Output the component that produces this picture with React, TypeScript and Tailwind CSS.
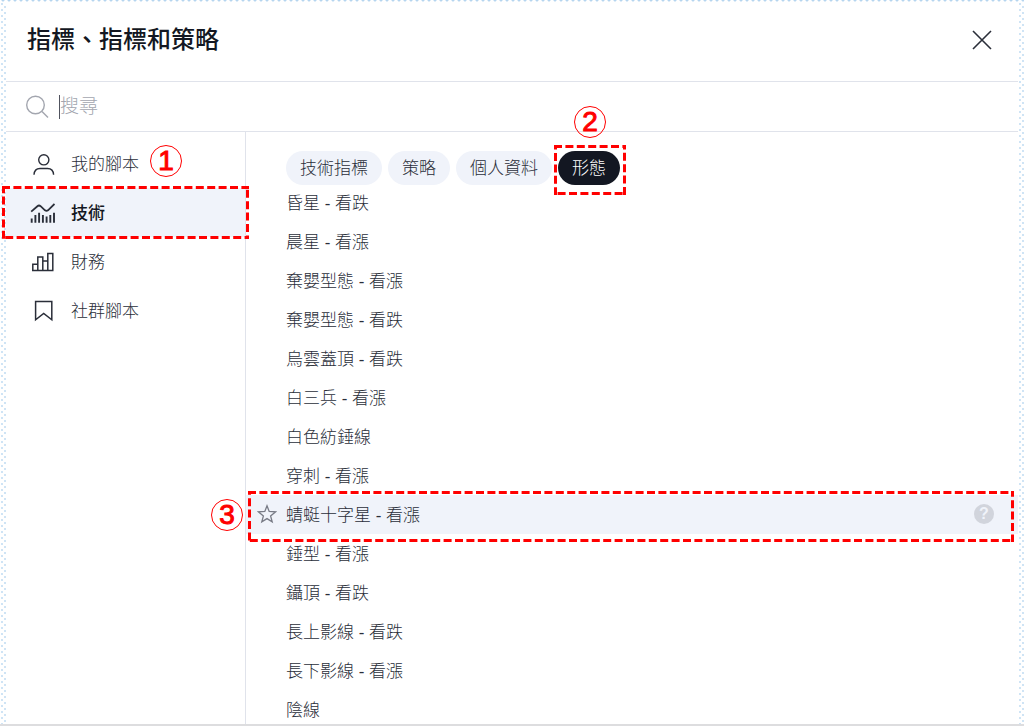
import React, { useState } from 'react';

type IconProps = { className?: string };

function UserIcon({ className }: IconProps) {
  return (
    <svg viewBox="0 0 25 24" className={className} fill="none" stroke="currentColor" strokeWidth="1.4" aria-hidden="true">
      <circle cx="13.8" cy="7.8" r="5.1" />
      <path d="M4 22.8c.2-4 2.600-6.300 6-6.300h7.600c3.400 0 5.800 2.300 6 6.300" />
    </svg>
  );
}

function TechnicalIcon({ className }: IconProps) {
  return (
    <svg viewBox="0 0 25 24" className={className} fill="none" stroke="currentColor" aria-hidden="true">
      <path strokeWidth="1.8" d="M1.200 10.600 7.400 5.200Q9 3.900 10.600 5.200L15 9.300Q16.500 10.500 18 9.300L24.500 3" />
      <path strokeWidth="1.9" d="M1.700 17.500v4.200M5.400 14v7.700M9.100 11.800v9.900M12.900 14v7.700M16.600 15.500v6.200M20.300 14v7.700M24 11.800v9.900" />
    </svg>
  );
}

function FinanceIcon({ className }: IconProps) {
  return (
    <svg viewBox="0 0 25 24" className={className} fill="none" stroke="currentColor" strokeWidth="1.500" aria-hidden="true">
      <path d="M2.800 20.500v-6.300h5M7.800 20.500V7h5v13.500M12.800 11h5M17.800 20.500V3.400h5v17.100M2 20.500h21.500" />
    </svg>
  );
}

function BookmarkIcon({ className }: IconProps) {
  return (
    <svg viewBox="0 0 25 24" className={className} fill="none" stroke="currentColor" strokeWidth="1.500" aria-hidden="true">
      <path d="M5.600 2.500h16.200v18.300l-8.100-6.300-8.100 6.300z" />
    </svg>
  );
}

function DashedFrame({ className }: IconProps) {
  return (
    <div className={`pointer-events-none absolute z-10 ${className}`}>
      <svg className="block h-full w-full overflow-hidden" aria-hidden="true">
        <rect width="100%" height="100%" fill="none" stroke="#ff0000" strokeWidth="6" strokeDasharray="8 3.400" />
      </svg>
    </div>
  );
}

function Step({ n, className }: { n: number; className: string }) {
  return (
    <span
      className={`absolute z-10 flex size-8 items-center justify-center rounded-full border border-[#ff0000] font-['Liberation_Sans',sans-serif] text-[28px] leading-none text-[#ff0000] [-webkit-text-stroke:1px_#ff0000] ${className}`}
    >
      {n}
    </span>
  );
}

const sections = [
  { label: '我的腳本', Icon: UserIcon },
  { label: '技術', Icon: TechnicalIcon },
  { label: '財務', Icon: FinanceIcon },
  { label: '社群腳本', Icon: BookmarkIcon },
];

const tabs = ['技術指標', '策略', '個人資料', '形態'];

const patterns = [
  '昏星 - 看跌',
  '晨星 - 看漲',
  '棄嬰型態 - 看漲',
  '棄嬰型態 - 看跌',
  '烏雲蓋頂 - 看跌',
  '白三兵 - 看漲',
  '白色紡錘線',
  '穿刺 - 看漲',
  '蜻蜓十字星 - 看漲',
  '錘型 - 看漲',
  '鑷頂 - 看跌',
  '長上影線 - 看跌',
  '長下影線 - 看漲',
  '陰線',
];

export default function App() {
  const [section, setSection] = useState('技術');
  const [tab, setTab] = useState('形態');
  const [picked, setPicked] = useState('蜻蜓十字星 - 看漲');

  return (
    <div className="flex h-screen flex-col bg-white font-['Liberation_Sans','Noto_Sans_CJK_TC',sans-serif] text-[17px] text-[#2a2e39]">
      <div className="h-0.5 shrink-0 bg-[radial-gradient(circle_at_3px_0px,#b5d5ef_1px,transparent_2px)] bg-[size:6px_6px]" />
      <div className="flex min-h-0 flex-1">
        <div className="w-1.5 shrink-0 bg-[radial-gradient(circle_at_2px_2px,#cfe4f5_1px,transparent_1px),radial-gradient(circle_at_5px_5px,#cfe4f5_1px,transparent_1px)] bg-[size:6px_6px]" />

        <main className="flex min-w-0 flex-1 flex-col">
          <header className="flex h-20 shrink-0 items-center justify-between border-b border-[#e0e3eb] pr-6 pl-5">
            <h1 className="pb-1 pl-px text-2xl font-medium text-[#131722]">指標、指標和策略</h1>
            <button type="button" aria-label="關閉" className="mb-1 text-[#2a2e39]">
              <svg viewBox="0 0 24 24" className="size-6" fill="none" stroke="currentColor" strokeWidth="1.600" aria-hidden="true">
                <path d="M3 3l18 18M21 3 3 21" />
              </svg>
            </button>
          </header>

          <label className="flex h-[50px] shrink-0 items-center border-b border-[#e0e3eb] pl-5">
            <svg viewBox="0 0 24 24" className="size-6 text-[#a3a6af]" fill="none" stroke="currentColor" strokeWidth="1.400" aria-hidden="true">
              <circle cx="9.500" cy="10" r="8.800" />
              <path d="m16 16.500 6 6" />
            </svg>
            <span className="ml-[9px] h-6 w-px bg-[#50535e]" />
            <input
              type="text"
              aria-label="搜尋"
              placeholder="搜尋"
              className="min-w-0 flex-1 bg-transparent pt-0.5 text-[19px] font-light outline-none placeholder:text-[#a3a6af]"
            />
          </label>

          <div className="flex min-h-0 flex-1">
            <nav className="w-60 shrink-0 border-r border-[#e0e3eb] pt-[7px]">
              {sections.map(({ label, Icon }) => {
                const active = label === section;
                return (
                  <div key={label} className="relative">
                    <button
                      type="button"
                      onClick={() => setSection(label)}
                      className={`flex h-[49px] w-full items-center gap-4 pl-6 text-left ${
                        active ? 'bg-[#f0f3fa] font-medium text-[#131722]' : 'font-light'
                      }`}
                    >
                      <Icon className="h-6 w-[25px] shrink-0 text-[#2a2e39]" />
                      <span className="pt-0.5">{label}</span>
                    </button>
                    {label === '我的腳本' && <Step n={1} className="top-1.5 left-36" />}
                    {label === '技術' && <DashedFrame className="-top-0.5 -right-1 -bottom-0.5 -left-1" />}
                  </div>
                );
              })}
            </nav>

            <section className="flex min-w-0 flex-1 flex-col">
              <div className="flex shrink-0 gap-1.5 pt-[19px] pl-10">
                {tabs.map((name) => (
                  <div key={name} className="relative">
                    <button
                      type="button"
                      onClick={() => setTab(name)}
                      className={`h-[34px] rounded-full px-3.5 pt-0.5 font-light whitespace-nowrap ${
                        name === tab ? 'bg-[#131722] text-white' : 'bg-[#f0f3fa]'
                      }`}
                    >
                      {name}
                    </button>
                    {name === '形態' && (
                      <>
                        <DashedFrame className="-top-1.5 -right-1.5 -bottom-2.5 -left-1" />
                        <Step n={2} className="-top-[45px] left-4" />
                      </>
                    )}
                  </div>
                ))}
              </div>

              <ul className="-mt-0.5 min-h-0 flex-1 [clip-path:inset(0_0_0_-40px)]">
                {patterns.map((name) => {
                  const active = name === picked;
                  return (
                    <li key={name} className={`relative flex h-[39px] items-center ${active ? 'bg-[#f0f3fa]' : ''}`}>
                      <span className="flex w-10 shrink-0 justify-center">
                        {active && (
                          <svg viewBox="0 0 20 20" className="mb-0.5 ml-0.5 size-5 text-[#787b86]" fill="none" stroke="currentColor" strokeWidth="1.300" aria-hidden="true">
                            <path d="m10 1.800 2.200 5.700 6.200.400-4.800 4 1.600 6-5.200-3.300-5.200 3.300 1.600-6-4.800-4 6.200-.400z" />
                          </svg>
                        )}
                      </span>
                      <button type="button" onClick={() => setPicked(name)} className="flex-1 pt-0.5 text-left font-light">
                        {name}
                      </button>
                      {active && (
                        <button
                          type="button"
                          aria-label="說明"
                          className="mr-6 mb-0.5 flex size-5 items-center justify-center rounded-full bg-[#d1d4dc] text-base leading-none font-bold text-[#f0f3fa]"
                        >
                          ?
                        </button>
                      )}
                      {name === '蜻蜓十字星 - 看漲' && (
                        <>
                          <DashedFrame className="-top-1 right-1 -bottom-2 left-0.5" />
                          <Step n={3} className="top-1 -left-[35px]" />
                        </>
                      )}
                    </li>
                  );
                })}
              </ul>
            </section>
          </div>
        </main>

        <div className="w-1.5 shrink-0 bg-[radial-gradient(circle_at_2px_2px,#cfe4f5_1px,transparent_1px),radial-gradient(circle_at_5px_5px,#cfe4f5_1px,transparent_1px)] bg-[size:6px_6px]" />
      </div>
      <div className="h-0.5 shrink-0 bg-[#dddddf]" />
    </div>
  );
}
